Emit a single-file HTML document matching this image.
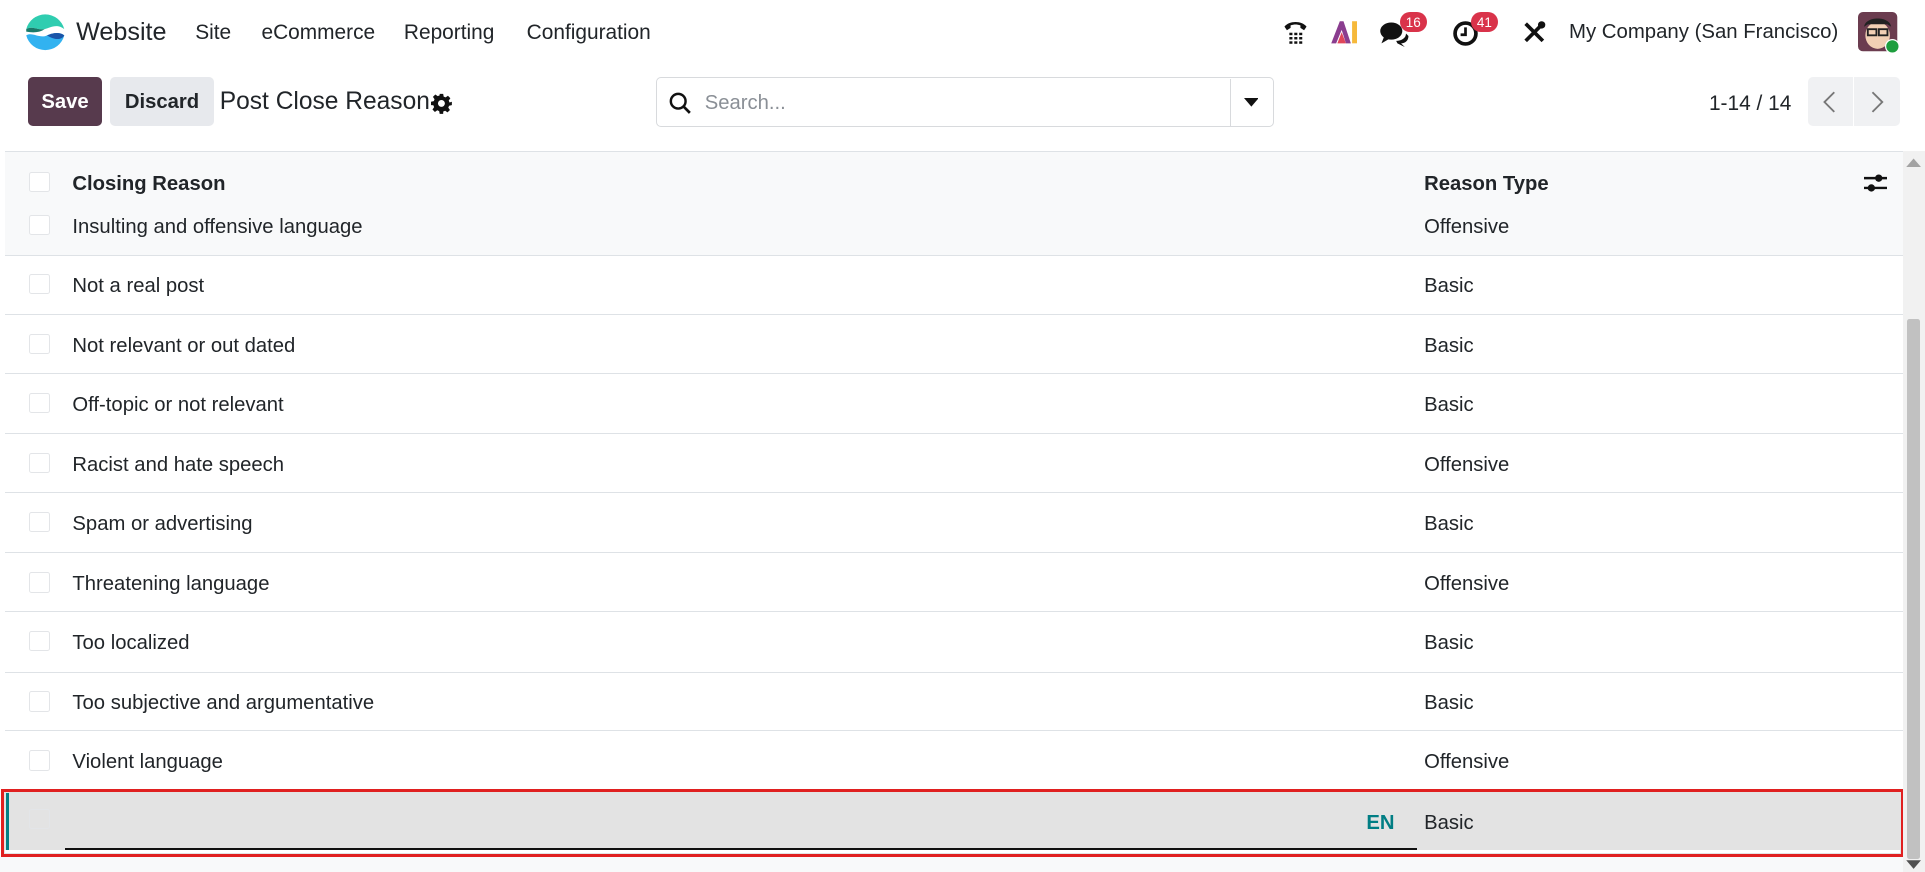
<!DOCTYPE html>
<html><head><meta charset="utf-8">
<style>
html{zoom:1.2277}
body{margin:0;width:1568px;height:710px;overflow:hidden;background:#fff;font-family:"Liberation Sans",sans-serif;color:#212529;position:relative}
.a{position:absolute;white-space:nowrap}
.nav{font-size:17px;top:17px}
.row{position:absolute;left:4px;width:1546px;border-bottom:1px solid #dee2e6;font-size:16.5px}
.row .a{top:16px}
.cb{position:absolute;left:20px;width:15px;height:15px;border:1px solid #e3e5e8;border-radius:2px;background:#fff}
.badge{position:absolute;background:#d9334a;color:#fff;font-size:11px;border-radius:9px;padding:2px 5px;top:10px}
</style></head><body>
<svg class="a" style="left:20px;top:10px" width="33" height="33" viewBox="0 0 33 33">
<path d="M1 14 A16 16 0 0 1 32 14 C26 9 20 13 16 14 C10 15 6 11 1 14Z" fill="#2fcdb0"/>
<path d="M1 14 C6 11 10 15 16 14 C12 17 6 17 1 16Z" fill="#1a7a6a"/>
<path d="M1 19 C6 16 12 22 18 19 C23 17 28 16 32 19 A16 16 0 0 1 1 19Z" fill="#32b2f0"/>
<path d="M18 19 C23 17 28 16 32 19 C30 23 24 23 18 19Z" fill="#1a55a8"/>
</svg>
<div class="a" style="left:62px;top:15px;font-size:20.5px">Website</div>
<div class="a nav" style="left:159px">Site</div>
<div class="a nav" style="left:213px">eCommerce</div>
<div class="a nav" style="left:329px">Reporting</div>
<div class="a nav" style="left:429px">Configuration</div>
<svg class="a" style="left:1044px;top:15px" width="22" height="22" viewBox="0 0 22 22"><path d="M2 7 C6 2 16 2 20 7 L18 10 L15 8 L15 6 C12 5 10 5 7 6 L7 8 L4 10Z" fill="#111"/><g fill="#111"><rect x="6" y="12" width="2.5" height="2"/><rect x="10" y="12" width="2.5" height="2"/><rect x="14" y="12" width="2.5" height="2"/><rect x="6" y="15.5" width="2.5" height="2"/><rect x="10" y="15.5" width="2.5" height="2"/><rect x="14" y="15.5" width="2.5" height="2"/><rect x="6" y="19" width="2.5" height="2"/><rect x="10" y="19" width="2.5" height="2"/><rect x="14" y="19" width="2.5" height="2"/></g></svg>
<svg class="a" style="left:1083px;top:16px" width="24" height="20" viewBox="0 0 24 20"><path d="M1 19 L8 1 L11 1 L17 19 L13 19 L9.5 8 L5 19Z" fill="#8a3d8f"/><path d="M6 19 L9.5 10 L13 19Z" fill="#e0465a"/><rect x="18" y="1" width="4" height="18" fill="#f6b93b"/></svg>
<svg class="a" style="left:1123px;top:16px" width="26" height="22" viewBox="0 0 26 22"><ellipse cx="10" cy="9" rx="9" ry="7" fill="#111"/><path d="M4 14 L2 19 L9 15Z" fill="#111"/><path d="M14 17 C18 17 22 15 22 11 L24 13 C24 17 21 19 18 19 L21 22 L15 19Z" fill="#111"/></svg>
<div class="badge" style="left:1140px">16</div>
<svg class="a" style="left:1183px;top:16px" width="22" height="22" viewBox="0 0 22 22"><circle cx="11" cy="11" r="8.5" fill="none" stroke="#111" stroke-width="3"/><path d="M11 6 V12 H7" fill="none" stroke="#111" stroke-width="2.2"/></svg>
<div class="badge" style="left:1198px">41</div>
<svg class="a" style="left:1240px;top:16px" width="20" height="20" viewBox="0 0 20 20"><path d="M3 3 L17 17 M17 3 L3 17" stroke="#111" stroke-width="3"/><circle cx="16" cy="4" r="3" fill="#111"/></svg>
<div class="a nav" style="left:1278px;font-size:16.6px">My Company (San Francisco)</div>
<svg class="a" style="left:1513px;top:10px" width="34" height="34" viewBox="0 0 34 34"><rect width="32" height="32" rx="4" fill="#6b3c4f"/><ellipse cx="16" cy="19" rx="10" ry="11" fill="#f2d0b4"/><path d="M5 12 C6 3 26 3 27 12 L24 10 L8 10Z" fill="#222"/><rect x="8" y="14" width="7" height="5" fill="none" stroke="#222" stroke-width="1.5"/><rect x="17" y="14" width="7" height="5" fill="none" stroke="#222" stroke-width="1.5"/><circle cx="28" cy="28" r="5.5" fill="#1e9e3e" stroke="#fff" stroke-width="1"/></svg>
<div class="a" style="left:23px;top:63px;width:60px;height:40px;background:#573a4d;border-radius:4px;color:#fff;font-weight:bold;font-size:16.5px;line-height:42px;text-align:center">Save</div>
<div class="a" style="left:90px;top:63px;width:84px;height:40px;background:#e7e9ed;border-radius:4px;font-weight:bold;font-size:16.5px;line-height:42px;text-align:center">Discard</div>
<div class="a" style="left:179px;top:72px;font-size:20px">Post Close Reason</div>
<svg class="a" style="left:351px;top:76px" width="17" height="17" viewBox="0 0 24 24"><path fill="#111" d="M10 1h4l.6 3.2 2.2.9 2.7-1.9 2.8 2.8-1.9 2.7.9 2.2L24 10v4l-3.2.6-.9 2.2 1.9 2.7-2.8 2.8-2.7-1.9-2.2.9L14 24h-4l-.6-3.2-2.2-.9-2.7 1.9-2.8-2.8 1.9-2.7-.9-2.2L0 14v-4l3.2-.6.9-2.2-1.9-2.7 2.8-2.8 2.7 1.9 2.2-.9zM12 8a4 4 0 100 8 4 4 0 000-8z"/></svg>
<div class="a" style="left:534px;top:63px;width:502px;height:39px;border:1px solid #d8dadd;border-radius:4px"></div>
<div class="a" style="left:1002px;top:64px;width:1px;height:39px;background:#d8dadd"></div>
<svg class="a" style="left:545px;top:75px" width="18" height="18" viewBox="0 0 18 18"><circle cx="7.5" cy="7.5" r="6" fill="none" stroke="#111" stroke-width="2"/><path d="M12 12 L17 17" stroke="#111" stroke-width="2.2"/></svg>
<div class="a" style="left:574px;top:75px;font-size:16.5px;color:#8a8f96">Search...</div>
<svg class="a" style="left:1013px;top:80px" width="12" height="7"><path d="M0 0 H12 L6 7Z" fill="#111"/></svg>
<div class="a" style="left:1392px;top:75px;font-size:17px">1-14 / 14</div>
<div class="a" style="left:1473px;top:63px;width:36px;height:40px;background:#f0f1f3;border-radius:4px 0 0 4px"></div>
<div class="a" style="left:1510px;top:63px;width:38px;height:40px;background:#f0f1f3;border-radius:0 4px 4px 0"></div>
<svg class="a" style="left:1484px;top:74px" width="12" height="18"><path d="M10 1 L2 9 L10 17" fill="none" stroke="#777" stroke-width="1.5"/></svg>
<svg class="a" style="left:1523px;top:74px" width="12" height="18"><path d="M2 1 L10 9 L2 17" fill="none" stroke="#777" stroke-width="1.5"/></svg>
<div class="a" style="left:4px;top:123px;width:1546px;height:1px;background:#dee2e6"></div>
<div class="row" style="top:124px;height:84px;background:#f8f9fa"></div>
<div class="cb" style="top:140px;left:24px"></div>
<div class="a" style="left:59px;top:141px;font-weight:bold;font-size:16.5px">Closing Reason</div>
<div class="a" style="left:1160px;top:141px;font-weight:bold;font-size:16.5px">Reason Type</div>
<svg class="a" style="left:1518px;top:140px" width="19" height="18" viewBox="0 0 19 18"><path d="M0 5 H19 M0 13 H19" stroke="#111" stroke-width="2"/><circle cx="12" cy="5" r="3" fill="#111"/><circle cx="6" cy="13" r="3" fill="#111"/></svg>
<div class="cb" style="top:175px;left:24px"></div>
<div class="a" style="left:59px;top:176px;font-size:16.5px">Insulting and offensive language</div>
<div class="a" style="left:1160px;top:176px;font-size:16.5px">Offensive</div>
<div class="row" style="top:208px;height:48px"><div class="cb" style="top:15px"></div><div class="a" style="left:55px">Not a real post</div><div class="a" style="left:1156px">Basic</div></div>
<div class="row" style="top:257px;height:47px"><div class="cb" style="top:15px"></div><div class="a" style="left:55px">Not relevant or out dated</div><div class="a" style="left:1156px">Basic</div></div>
<div class="row" style="top:305px;height:48px"><div class="cb" style="top:15px"></div><div class="a" style="left:55px">Off-topic or not relevant</div><div class="a" style="left:1156px">Basic</div></div>
<div class="row" style="top:354px;height:47px"><div class="cb" style="top:15px"></div><div class="a" style="left:55px">Racist and hate speech</div><div class="a" style="left:1156px">Offensive</div></div>
<div class="row" style="top:402px;height:48px"><div class="cb" style="top:15px"></div><div class="a" style="left:55px">Spam or advertising</div><div class="a" style="left:1156px">Basic</div></div>
<div class="row" style="top:451px;height:47px"><div class="cb" style="top:15px"></div><div class="a" style="left:55px">Threatening language</div><div class="a" style="left:1156px">Offensive</div></div>
<div class="row" style="top:499px;height:48px"><div class="cb" style="top:15px"></div><div class="a" style="left:55px">Too localized</div><div class="a" style="left:1156px">Basic</div></div>
<div class="row" style="top:548px;height:47px"><div class="cb" style="top:15px"></div><div class="a" style="left:55px">Too subjective and argumentative</div><div class="a" style="left:1156px">Basic</div></div>
<div class="row" style="top:596px;height:47px"><div class="cb" style="top:15px"></div><div class="a" style="left:55px">Violent language</div><div class="a" style="left:1156px">Offensive</div></div>
<div class="a" style="left:1px;top:643px;width:1550px;height:55px;border:3px solid #e02020;background:#e3e3e3;box-sizing:border-box"></div>
<div class="a" style="left:4px;top:692px;width:1544px;height:3px;background:#fff"></div>
<div class="a" style="left:5px;top:646px;width:2px;height:46px;background:#017e84"></div>
<div class="cb" style="top:659px;left:24px;background:#e3e3e3"></div>
<div class="a" style="left:53px;top:691px;width:1101px;height:1px;background:#111"></div>
<div class="a" style="left:1113px;top:661px;font-size:16.5px;font-weight:bold;color:#017e84">EN</div>
<div class="a" style="left:1160px;top:661px;font-size:16.5px">Basic</div>
<div class="a" style="left:0;top:698px;width:1550px;height:12px;background:#f8f9fa"></div>
<div class="a" style="left:1550px;top:123px;width:18px;height:587px;background:#f1f1f1"></div>
<div class="a" style="left:1553px;top:260px;width:11px;height:440px;background:#c1c1c1;border-radius:2px"></div>
<svg class="a" style="left:1552px;top:127px" width="14" height="10"><path d="M1 9 L7 2 L13 9Z" fill="#a3a3a3"/></svg>
<svg class="a" style="left:1552px;top:700px" width="14" height="9"><path d="M1 1 L7 8 L13 1Z" fill="#505050"/></svg>
</body></html>
